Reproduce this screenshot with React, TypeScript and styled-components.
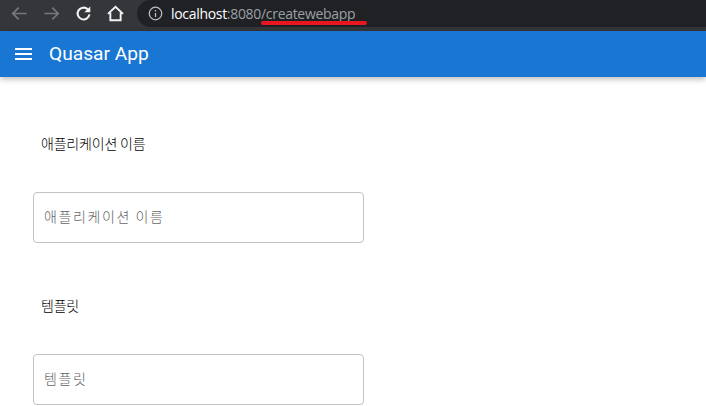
import styled, { createGlobalStyle } from 'styled-components';

const GlobalStyle = createGlobalStyle`
  html, body { margin: 0; padding: 0; background: #fff; overflow: hidden; }
  body { font-family: Roboto, "Noto Sans CJK KR", sans-serif; }
`;

const Page = styled.div`
  width: 706px;
  height: 406px;
  overflow: hidden;
  display: flex;
  flex-direction: column;
`;

const BrowserBar = styled.div`
  height: 31px;
  flex: none;
  background: #35363a;
  display: flex;
  align-items: flex-start;
`;

const NavButtons = styled.div`
  width: 137px;
  flex: none;
  height: 27px;
  display: flex;
  align-items: center;
  padding-left: 10px;
  gap: 13px;
  box-sizing: border-box;
`;

const NavIcon = styled.svg`
  width: 19px;
  height: 19px;
  flex: none;
  display: block;
`;

const Omnibox = styled.div`
  flex: 1;
  height: 27px;
  background: #202124;
  border-radius: 14px 0 0 14px;
  display: flex;
  align-items: center;
  padding-left: 11px;
  position: relative;
  font-size: 14px;
  letter-spacing: -0.31px;
  font-family: "Open Sans", Roboto, sans-serif;
`;

const InfoIcon = styled.svg`
  width: 15px;
  height: 15px;
  flex: none;
  margin-right: 8px;
`;

const Host = styled.span`
  color: #fff;
`;

const UrlRest = styled.span`
  color: #9aa0a6;
`;

const RedMark = styled.div`
  position: absolute;
  left: 124px;
  top: 21px;
  width: 106px;
  height: 4px;
  border-radius: 2px;
  background: #e8171f;
`;

const Toolbar = styled.header`
  height: 46px;
  flex: none;
  background: #1976d2;
  color: #fff;
  display: flex;
  align-items: center;
  padding-left: 14px;
  box-shadow: 0 2px 6px rgba(0, 0, 0, 0.28);
  position: relative;
`;

const MenuIcon = styled.svg`
  width: 19px;
  height: 14px;
  flex: none;
  margin-right: 16px;
`;

const Title = styled.div`
  font-size: 19.2px;
  font-weight: 400;
  padding-bottom: 2px;
`;

const Form = styled.main`
  padding: 56px 0 0 33px;
  display: flex;
  flex-direction: column;
`;

const Field = styled.section`
  width: 331px;
  display: flex;
  flex-direction: column;
  margin-bottom: 52px;
`;

const FieldLabel = styled.label`
  font-family: "Noto Sans CJK KR", sans-serif;
  font-size: 14px;
  font-weight: 300;
  line-height: 20px;
  letter-spacing: -0.2px;
  color: #000;
  padding-left: 8px;
  margin-bottom: 39px;
`;

const TextInput = styled.input`
  box-sizing: border-box;
  width: 331px;
  height: 51px;
  border: 1px solid #c2c2c2;
  border-radius: 4px;
  padding: 0 10px 3px;
  font-family: "Noto Sans CJK KR", sans-serif;
  font-size: 14px;
  font-weight: 300;
  letter-spacing: 1.6px;
  outline: none;
  &::placeholder { color: #666; opacity: 1; }
`;

export default function App() {
  return (
    <Page>
      <GlobalStyle />
      <BrowserBar>
        <NavButtons>
          <NavIcon viewBox="0 0 24 24" fill="none" stroke="#77787b" strokeWidth="2.2">
            <path d="M21 12H4M11 4.5 3.5 12l7.5 7.5" />
          </NavIcon>
          <NavIcon viewBox="0 0 24 24" fill="none" stroke="#77787b" strokeWidth="2.2">
            <path d="M3 12h17M13 4.5l7.5 7.5-7.5 7.5" />
          </NavIcon>
          <NavIcon viewBox="0 0 24 24" fill="none" stroke="#f1f3f4" strokeWidth="2.6">
            <path d="M19.5 13a7.5 7.5 0 1 1-2.2-6.3L20 9" />
            <path d="M20.5 3v7.5H13" fill="#f1f3f4" stroke="none" />
          </NavIcon>
          <NavIcon viewBox="0 0 24 24" fill="none" stroke="#f1f3f4" strokeWidth="2.4">
            <path d="M2.5 12.5 12 3.5l9.5 9M5.5 11v9.5h13V11" />
          </NavIcon>
        </NavButtons>
        <Omnibox>
          <InfoIcon viewBox="0 0 24 24" fill="none" stroke="#bdc1c6" strokeWidth="2">
            <circle cx="12" cy="12" r="10" />
            <path d="M12 11v6.5M12 6.5v2.2" />
          </InfoIcon>
          <Host>localhost</Host>
          <UrlRest>:8080/createwebapp</UrlRest>
          <RedMark />
        </Omnibox>
      </BrowserBar>
      <Toolbar>
        <MenuIcon viewBox="0 0 19 14" fill="#fff">
          <rect x="1" y="1" width="17" height="2" />
          <rect x="1" y="6" width="17" height="2" />
          <rect x="1" y="11" width="17" height="2" />
        </MenuIcon>
        <Title>Quasar App</Title>
      </Toolbar>
      <Form>
        <Field>
          <FieldLabel>애플리케이션 이름</FieldLabel>
          <TextInput placeholder="애플리케이션 이름" />
        </Field>
        <Field>
          <FieldLabel>템플릿</FieldLabel>
          <TextInput placeholder="템플릿" />
        </Field>
      </Form>
    </Page>
  );
}
